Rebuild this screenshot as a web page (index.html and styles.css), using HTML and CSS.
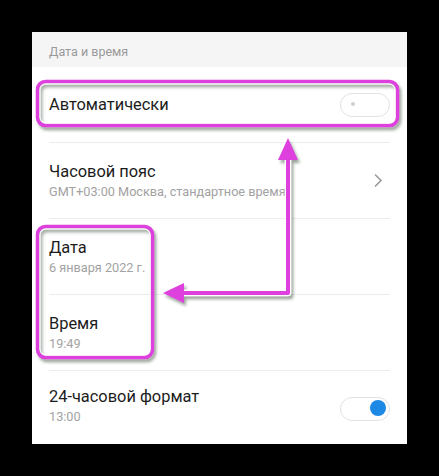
FILE: index.html
```html
<!DOCTYPE html>
<html lang="ru">

<head>
    <meta charset="UTF-8">
    <meta name="viewport" content="width=device-width, initial-scale=1.0">
    <title>Дата и время</title>

    <link rel="stylesheet" href="styles.css">
</head>

<body>
    <div class="screen">
        <div class="section">Дата и время</div>

        <div class="row">
            <span class="row__title">Автоматически</span>
            <span class="switch"><span class="switch__knob"></span></span>
        </div>

        <div class="row">
            <div class="row__text">
                <div class="row__title">Часовой пояс</div>
                <div class="row__sub">GMT+03:00 Москва, стандартное время</div>
            </div>
            <svg class="chevron" width="10" height="15" viewBox="0 0 10 15">
                <path d="M2 1.5 L8 7.5 L2 13.5" fill="none" stroke="#9a9a9a" stroke-width="1.6" />
            </svg>
        </div>

        <div class="row">
            <div class="row__text">
                <div class="row__title">Дата</div>
                <div class="row__sub">6 января 2022 г.</div>
            </div>
        </div>

        <div class="row">
            <div class="row__text">
                <div class="row__title">Время</div>
                <div class="row__sub">19:49</div>
            </div>
        </div>

        <div class="row row--last">
            <div class="row__text">
                <div class="row__title">24-часовой формат</div>
                <div class="row__sub">13:00</div>
            </div>
            <span class="switch switch--on"><span class="switch__knob"></span></span>
        </div>
    </div>

    <!-- пометки поверх скриншота -->
    <svg class="marks" width="439" height="476" viewBox="0 0 439 476">
        <defs>
            <filter id="shade" x="-10%" y="-10%" width="130%" height="130%">
                <feDropShadow dx="2" dy="3" stdDeviation="1.6" flood-color="#4a5a4a" flood-opacity="0.55" />
            </filter>
        </defs>
        <g filter="url(#shade)">
            <rect x="37.5" y="81.5" width="360" height="44" rx="8" fill="none" stroke="#dd3fdc" stroke-width="3.5" />
            <rect x="40" y="84" width="355" height="39" rx="6" fill="none" stroke="#fff" stroke-width="1" />

            <rect x="37.5" y="226.5" width="115" height="131" rx="8" fill="none" stroke="#dd3fdc" stroke-width="3.5" />
            <rect x="40" y="229" width="110" height="126" rx="6" fill="none" stroke="#fff" stroke-width="1" />

            <path d="M288 156 V293 H180" fill="none" stroke="#fff" stroke-width="6.5" stroke-linejoin="round" />
            <path d="M288 156 V293 H180" fill="none" stroke="#dd3fdc" stroke-width="4" stroke-linejoin="round" />
            <polygon points="288,138 298,160 278,160" fill="#dd3fdc" />
            <polygon points="163,293 184,283 184,303" fill="#dd3fdc" />
        </g>
    </svg>
</body>

</html>
```

FILE: styles.css
```css
body {
    margin: 0;
    background-color: #000;
    font-family: Roboto, "Noto Sans", sans-serif;
    position: relative;
    width: 439px;
    height: 476px;
    overflow: hidden;
}

.screen {
    margin: 32px 0 0 32px;
    width: 375px;
    height: 412px;
    background-color: #fff;
}

.section {
    height: 35px;
    line-height: 40px;
    padding-left: 17px;
    background-color: #f5f5f5;
    color: #9a9a9a;
    font-size: 12.5px;
}

.row {
    display: flex;
    align-items: center;
    justify-content: space-between;
    height: 75px;
    margin: 0 17px;
    border-bottom: 1px solid #ececec;
}

.row--last {
    border-bottom: none;
}

.row__text {
    padding-top: 2px;
}

.row__title {
    font-size: 16.4px;
    line-height: 20px;
    color: #1c1c1c;
}

.row__sub {
    font-size: 12.7px;
    line-height: 20px;
    color: #a2a2a2;
}

.row--last .row__text {
    padding-top: 0;
    margin-top: -3px;
}

.chevron {
    margin-right: 7px;
}

.switch {
    position: relative;
    display: block;
    box-sizing: border-box;
    width: 50px;
    height: 24px;
    border: 1.5px solid #e2e2e2;
    border-radius: 12px;
    background-color: #fff;
}

.switch__knob {
    position: absolute;
    top: 8.5px;
    left: 10px;
    width: 4px;
    height: 4px;
    border-radius: 50%;
    background-color: #cfcfcf;
}

.switch--on .switch__knob {
    top: 2.5px;
    left: auto;
    right: 3px;
    width: 16px;
    height: 16px;
    background-color: #1e88e5;
}

.marks {
    position: absolute;
    top: 0;
    left: 0;
}
```
